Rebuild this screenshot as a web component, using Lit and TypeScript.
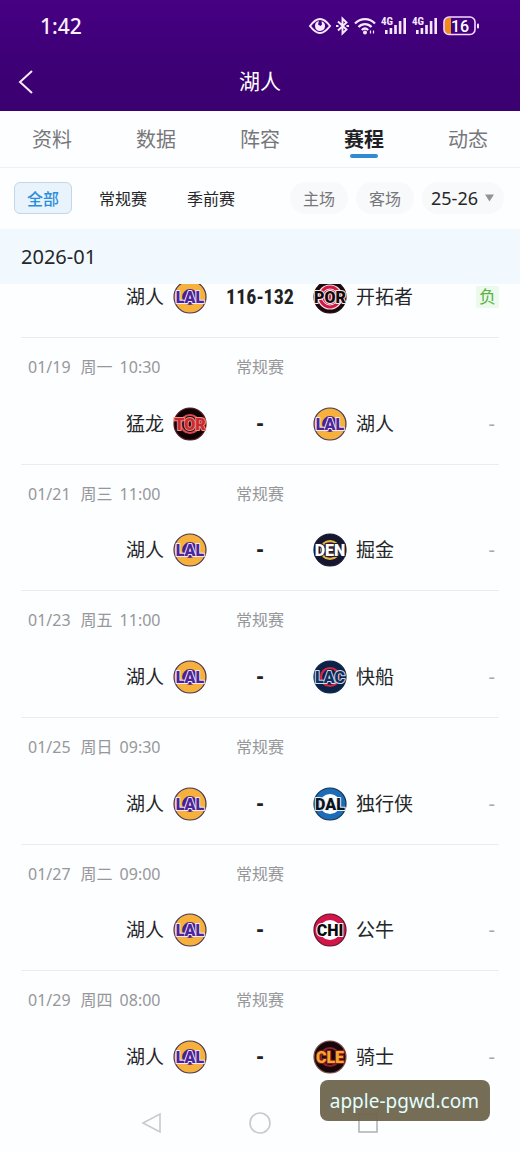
import { LitElement, html, svg, css } from "lit";
import { customElement, property } from "lit/decorators.js";

interface Brand {
  disc: string;
  rim: string;
  ring: string;
  core: string;
  text: string;
  edge: string;
}

const BRANDS: Record<string, Brand> = {
  LAL: { disc: "#f6b13c", rim: "#4b3550", ring: "#f6b13c", core: "#4a1f8c", text: "#4c2596", edge: "#f3e6fa" },
  POR: { disc: "#1c070c", rim: "#1c070c", ring: "#f3dfe4", core: "#cf1a46", text: "#120a0c", edge: "#f6e6ea" },
  TOR: { disc: "#0d0305", rim: "#5a141a", ring: "#e0474c", core: "#0d0305", text: "#c92a30", edge: "#ee8f86" },
  DEN: { disc: "#14172f", rim: "#14172f", ring: "#e5b93f", core: "#7d2233", text: "#ffffff", edge: "#1c1e33" },
  LAC: { disc: "#0b2347", rim: "#0b2347", ring: "#dd2340", core: "#0b2347", text: "#12305f", edge: "#cfdcf0" },
  DAL: { disc: "#1c6cb8", rim: "#123252", ring: "#ffffff", core: "#ffffff", text: "#0c131c", edge: "#e8f2fa" },
  CHI: { disc: "#d3154a", rim: "#5c1028", ring: "#ffffff", core: "#ffffff", text: "#0e0a0c", edge: "#ffffff" },
  CLE: { disc: "#17060a", rim: "#7c4c46", ring: "#86222f", core: "#17060a", text: "#f5a62c", edge: "#7d1d22" },
};

@customElement("team-logo")
class TeamLogo extends LitElement {
  @property() code = "LAL";

  static styles = css`
    :host { display: block; flex: none; }
    svg { display: block; overflow: visible; }
    .code {
      font-family: "Roboto", sans-serif;
      font-weight: 900;
      font-size: 16px;
      text-anchor: middle;
      paint-order: stroke;
      stroke-width: 2;
      stroke-linejoin: round;
    }
  `;

  render() {
    const b = BRANDS[this.code];
    return html`<svg width="34" height="34" viewBox="0 0 34 34" role="img" aria-label=${this.code}>
      <circle cx="17" cy="17" r="16" fill=${b.disc} stroke=${b.rim} stroke-width="1.2" />
      <circle cx="17" cy="17" r="9" fill=${b.core} stroke=${b.ring} stroke-width="2.2" />
      ${this.code === "POR"
        ? svg`<circle cx="17" cy="17" r="12" fill="#cf1a46" stroke="#f3dfe4" stroke-width="1.2" />
              <circle cx="17" cy="17" r="8" fill="none" stroke="#f3dfe4" stroke-width="1" />`
        : null}
      <text class="code" x="17" y="22.6" fill=${b.text} stroke=${b.edge}>${this.code}</text>
    </svg>`;
  }
}

@customElement("status-bar")
class StatusBar extends LitElement {
  static styles = css`
    :host {
      display: flex;
      align-items: center;
      justify-content: space-between;
      height: 52px;
      padding: 0 40px;
      color: #fdf0ff;
    }
    .time { font: 500 21px/52px "Noto Sans", sans-serif; }
    .icons { display: flex; align-items: center; gap: 5px; }
    svg { display: block; overflow: visible; }
    .net { font: 700 11px "Roboto Condensed", "Roboto", sans-serif; }
    .level { font: 500 16px "Roboto", sans-serif; text-anchor: middle; }
  `;

  private signal() {
    return html`<svg width="26" height="20" viewBox="0 0 26 20" fill="#f8e8ff">
      <text class="net" x="0" y="9">4G</text>
      <rect x="4" y="14" width="2.6" height="4" />
      <rect x="8.6" y="12" width="2.6" height="6" />
      <rect x="13.2" y="9" width="2.6" height="9" />
      <rect x="17.8" y="5" width="2.6" height="13" />
      <rect x="22.4" y="2" width="2.6" height="16" />
    </svg>`;
  }

  render() {
    return html`
      <span class="time">1:42</span>
      <span class="icons">
        <svg width="22" height="18" viewBox="0 0 22 18" fill="none" stroke="#f8e8ff" stroke-width="2">
          <path d="M1 9C5 3.600 8 2 11 2s6 1.600 10 7c-4 5.400-7 7-10 7S5 14.400 1 9Z" />
          <path d="M10 4a5 5 0 1 0 6 5.500A5 5 0 0 0 12.500 4.300L13 7.500 11.500 9 9 7.500Z" fill="#f8e8ff" stroke="none" />
        </svg>
        <svg width="13" height="18" viewBox="0 0 13 18" fill="none" stroke="#f8e8ff" stroke-width="1.9">
          <path d="M2 4.500 10.500 12.500 6.500 16.500V1.500L10.500 5.500 2 13.500" />
          <path d="M0 9h2.500M10.500 9H13" />
        </svg>
        <svg width="22" height="18" viewBox="0 0 22 18" fill="none" stroke="#f8e8ff" stroke-width="2.2">
          <path d="M1 6.500C6.500.6 15.500.6 21 6.500M4.500 10c3.700-3.900 9.300-3.900 13 0M7.800 13c2-1.900 4.400-1.900 6.400 0" />
          <circle cx="11" cy="15.500" r="2" fill="#f8e8ff" stroke="none" />
          <path d="M16.500 13.500v3M19.500 13.500v3" stroke-width="1.200" />
        </svg>
        ${this.signal()} ${this.signal()}
        <svg width="37" height="20" viewBox="0 0 37 20">
          <path d="M6 1.500h2V18H6a4.500 4.500 0 0 1-4.500-4.500V6A4.500 4.500 0 0 1 6 1.500Z" fill="#f08a1c" />
          <rect x="1" y="1" width="31" height="17.500" rx="5" fill="none" stroke="#f8d8ff" stroke-width="1.6" />
          <rect x="34" y="7.500" width="2" height="5" rx="1" fill="#f8e8ff" />
          <text class="level" x="17" y="15.500" fill="#fff">16</text>
        </svg>
      </span>
    `;
  }
}

interface Match {
  when?: string[];
  home: [string, string];
  away: [string, string];
  score: string;
  result: string;
}

@customElement("match-row")
class MatchRow extends LitElement {
  @property({ attribute: false }) match!: Match;

  static styles = css`
    :host {
      display: flex;
      flex-direction: column;
      justify-content: flex-end;
      overflow: hidden;
      box-sizing: border-box;
      border-bottom: 1px solid #ececf0;
    }
    .meta, .game {
      display: grid;
      grid-template-columns: 1fr 106px 1fr;
      align-items: center;
    }
    .meta {
      flex: 1;
      align-items: start;
      padding-top: 17px;
      font-size: 16px;
      line-height: 24px;
      color: #979799;
    }
    .when { display: flex; gap: 10px; padding-left: 7px; }
    .day { display: flex; gap: 7px; }
    .kind { text-align: center; }
    .game { height: 34px; padding-bottom: 23px; flex: none; }
    .side { display: flex; align-items: center; gap: 9px; font-size: 19px; line-height: 28px; color: #262628; }
    .home { justify-content: flex-end; }
    .score {
      text-align: center;
      white-space: nowrap;
      font-family: "Roboto Condensed", "Roboto", sans-serif;
      font-weight: 700;
      font-size: 20px;
      line-height: 28px;
      color: #222;
    }
    .pending { font-size: 24px; }
    .result { margin-left: auto; padding-right: 4px; font-size: 20px; color: #aaaaad; }
    .loss {
      padding: 0 3px;
      font-size: 17px;
      line-height: 22px;
      color: #5cb148;
      background: #ebfaeb;
      border-radius: 2px;
    }
  `;

  render() {
    const m = this.match;
    return html`
      ${m.when
        ? html`<div class="meta">
            <span class="when">
              <span>${m.when[0]}</span>
              <span class="day"><span>${m.when[1]}</span><span>${m.when[2]}</span></span>
            </span>
            <span class="kind">常规赛</span>
          </div>`
        : null}
      <div class="game">
        <span class="side home">${m.home[0]}<team-logo code=${m.home[1]}></team-logo></span>
        <span class="score ${m.score === "-" ? "pending" : ""}">${m.score}</span>
        <span class="side"><team-logo code=${m.away[1]}></team-logo>${m.away[0]}
          <span class="result ${m.result === "负" ? "loss" : ""}">${m.result}</span></span>
      </div>
    `;
  }
}

const LAKERS: [string, string] = ["湖人", "LAL"];
const upcoming = (date: string, day: string, time: string, home: [string, string], away: [string, string]): Match => ({
  when: [date, day, time], home, away, score: "-", result: "-",
});

const PLAYED: Match = { home: LAKERS, away: ["开拓者", "POR"], score: "116-132", result: "负" };
const UPCOMING: Match[] = [
  upcoming("01/19", "周一", "10:30", ["猛龙", "TOR"], LAKERS),
  upcoming("01/21", "周三", "11:00", LAKERS, ["掘金", "DEN"]),
  upcoming("01/23", "周五", "11:00", LAKERS, ["快船", "LAC"]),
  upcoming("01/25", "周日", "09:30", LAKERS, ["独行侠", "DAL"]),
  upcoming("01/27", "周二", "09:00", LAKERS, ["公牛", "CHI"]),
  upcoming("01/29", "周四", "08:00", LAKERS, ["骑士", "CLE"]),
];

@customElement("app-root")
class AppRoot extends LitElement {
  static styles = css`
    :host {
      display: flex;
      flex-direction: column;
      min-height: 100vh;
      position: relative;
      background: #fcfeff;
      font-family: "Noto Sans", "Noto Sans CJK SC", sans-serif;
      color: #262628;
    }
    button, select {
      font: inherit;
      color: inherit;
      background: none;
      border: 0;
      margin: 0;
      padding: 0;
    }
    .top { background: linear-gradient(#460083, #3e0077 50%, #3b0070); color: #fff; }
    .titlebar {
      display: grid;
      grid-template-columns: 52px 1fr 52px;
      align-items: center;
      height: 59px;
    }
    .back { display: flex; padding-left: 18px; }
    .titlebar h1 { margin: 0; padding-bottom: 2px; text-align: center; font-size: 21px; line-height: 30px; font-weight: 400; }
    .tabs {
      display: grid;
      grid-template-columns: repeat(5, 1fr);
      height: 56px;
      border-bottom: 1px solid #f3eff3;
    }
    .tab {
      display: flex;
      flex-direction: column;
      align-items: center;
      padding-top: 15px;
      font-size: 20px;
      line-height: 28px;
      color: #77777a;
      text-decoration: none;
    }
    .tab.on { color: #202022; font-weight: 700; }
    .tab.on::after { content: ""; width: 28px; height: 4px; border-radius: 2px; background: #2f8bd2; }
    .filters {
      display: flex;
      align-items: center;
      gap: 14px;
      height: 59px;
      padding: 0 16px 2px 14px;
      font-size: 16px;
    }
    .chip {
      height: 32px;
      padding: 0 12px;
      border: 1px solid transparent;
      border-radius: 6px;
      white-space: nowrap;
    }
    .chip.on {
      color: #2b8ddb;
      font-weight: 500;
      background: #e8f3fc;
      border-color: #c4d6e6;
    }
    .pills { display: flex; align-items: center; gap: 8px; margin-left: auto; }
    .pill { border-radius: 16px; background: #f7f9fa; color: #77777a; }
    .season { position: relative; display: flex; }
    .season select {
      appearance: none;
      height: 32px;
      width: 82px;
      padding: 0 24px 0 9px;
      border-radius: 16px;
      background: #f7f9fa;
      font-size: 18px;
    }
    .season svg { position: absolute; right: 10px; top: 12px; pointer-events: none; }
    .month {
      margin: 0;
      padding: 13px 21px;
      background: #f1f9fe;
      font-size: 20px;
      font-weight: 400;
      line-height: 29px;
    }
    .list { display: flex; flex: 1; flex-direction: column; padding: 0 21px; }
    .played { height: 54px; flex: none; }
    .upcoming { flex: 1; display: grid; grid-auto-rows: minmax(120px, 1fr); }
    .upcoming match-row:last-child { border-bottom-color: transparent; }
    .nav {
      display: flex;
      justify-content: center;
      align-items: center;
      gap: 84px;
      height: 50px;
      padding-bottom: 3px;
    }
    .nav button { display: flex; }
    .mark {
      position: absolute;
      right: 30px;
      bottom: 30px;
      padding: 7px 11px 6px 10px;
      border-radius: 8px;
      background: rgba(108, 100, 75, 0.94);
      color: #e2ffff;
      font: 19px/28px "Noto Sans", sans-serif;
    }
  `;

  render() {
    const tabs = ["资料", "数据", "阵容", "赛程", "动态"];
    return html`
      <header class="top">
        <status-bar></status-bar>
        <div class="titlebar">
          <button class="back" aria-label="返回">
            <svg width="16" height="26" viewBox="0 0 16 26" fill="none" stroke="#fce8ff" stroke-width="2">
              <path d="M14 2 2 13l12 11" />
            </svg>
          </button>
          <h1>湖人</h1>
        </div>
      </header>
      <nav class="tabs">
        ${tabs.map((t) => html`<a class="tab ${t === "赛程" ? "on" : ""}" href="#">${t}</a>`)}
      </nav>
      <div class="filters">
        <button class="chip on">全部</button>
        <button class="chip">常规赛</button>
        <button class="chip">季前赛</button>
        <div class="pills">
          <button class="chip pill">主场</button>
          <button class="chip pill">客场</button>
          <div class="season">
            <select aria-label="赛季"><option>25-26</option></select>
            <svg width="9" height="8" viewBox="0 0 10 9"><path d="M0 .5h10L5 8.500Z" fill="#8f9496" /></svg>
          </div>
        </div>
      </div>
      <h2 class="month">2026-01</h2>
      <main class="list">
        <match-row class="played" .match=${PLAYED}></match-row>
        <div class="upcoming">${UPCOMING.map((m) => html`<match-row .match=${m}></match-row>`)}</div>
      </main>
      <footer class="nav">
        <button aria-label="返回键">
          <svg width="24" height="24" viewBox="0 0 24 24" fill="none" stroke="#cbc9cb" stroke-width="1.6">
            <path d="M20 3v18L3 12Z" />
          </svg>
        </button>
        <button aria-label="主页键">
          <svg width="24" height="24" viewBox="0 0 24 24" fill="none" stroke="#cbc9cb" stroke-width="1.6">
            <circle cx="12" cy="12" r="10" />
          </svg>
        </button>
        <button aria-label="多任务键">
          <svg width="24" height="24" viewBox="0 0 24 24" fill="none" stroke="#b5b4b2" stroke-width="1.6">
            <rect x="3" y="3" width="18" height="18" />
          </svg>
        </button>
      </footer>
      <div class="mark">apple-pgwd.com</div>
    `;
  }
}
